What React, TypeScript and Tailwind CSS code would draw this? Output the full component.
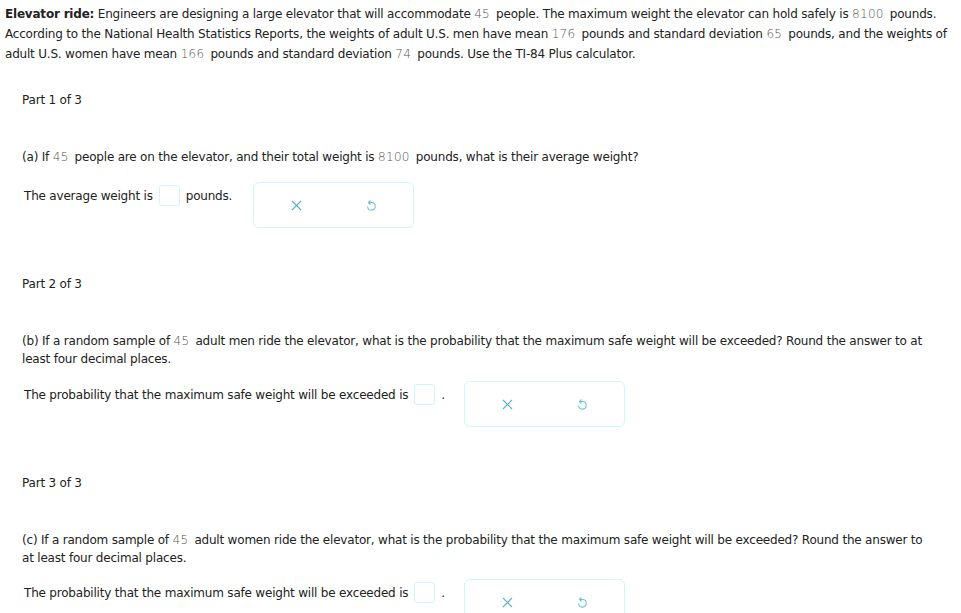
import React from "react";

function N({ v }: { v: string }) {
  return <span className="text-[#555] font-['DejaVu_Sans_ExtraLight','DejaVu_Sans',sans-serif] font-extralight mr-[6px] tracking-[0.3px]">{v}</span>;
}

function XIcon() {
  return (
    <svg width="11" height="11" viewBox="0 0 11 11" fill="none" stroke="#5aaed6" strokeWidth="1.1">
      <path d="M1 1 L10 10 M10 1 L1 10" />
    </svg>
  );
}

function UndoIcon() {
  return (
    <svg width="12" height="14" viewBox="0 0 12 14" fill="none" stroke="#6cc0e0" strokeWidth="1.1">
      <path d="M4 3.5 H6.5 A3.8 3.8 0 1 1 2.6 7.5" />
      <path d="M5.5 1.5 L3.5 3.5 L5.5 5.5" />
    </svg>
  );
}

function Actions() {
  return (
    <div className="w-[161px] h-[46px] border border-[#d4f4fb] rounded-[6px] flex items-center justify-between pl-[37px] pr-[36px] pt-[1px]">
      <XIcon />
      <UndoIcon />
    </div>
  );
}

function Box() {
  return <span className="inline-block w-[21px] h-[21px] border border-[#d4f4fb] rounded-[3px] align-middle mx-[6px]" />;
}

export default function App() {
  return (
    <div className="w-[961px] h-[613px] overflow-hidden bg-white text-[#222] font-['DejaVu_Sans',sans-serif] text-[12px] leading-[20px] tracking-[-0.2px]">
      <div className="pl-[5px] pt-[4px]">
        <p>
          <b>Elevator ride:</b> Engineers are designing a large elevator that will accommodate <N v="45" />people. The maximum
          weight the elevator can hold safely is <N v="8100" />pounds.
          <br />
          According to the National Health Statistics Reports, the weights of adult U.S. men have mean <N v="176" />pounds and
          standard deviation <N v="65" />pounds, and the weights of
          <br />
          adult U.S. women have mean <N v="166" />pounds and standard deviation <N v="74" />pounds. Use the TI-84 Plus calculator.
        </p>
      </div>

      <div className="pl-[22px] pt-[26px]">Part 1 of 3</div>
      <div className="pl-[22px] pt-[37px]">
        (a) If <N v="45" />people are on the elevator, and their total weight is <N v="8100" />pounds, what is their average weight?
      </div>
      <div className="pl-[24px] pt-[8px] flex items-start gap-[21px]">
        <div className="pt-[10px] flex items-center">
          The average weight is<Box />pounds.
        </div>
        <div className="mt-[7px]">
          <Actions />
        </div>
      </div>

      <div className="pl-[22px] pt-[46px]">Part 2 of 3</div>
      <div className="pl-[22px] pt-[38px] leading-[18px]">
        (b) If a random sample of <N v="45" />adult men ride the elevator, what is the probability that the maximum safe weight will be
        exceeded? Round the answer to at
        <br />
        least four decimal places.
      </div>
      <div className="pl-[24px] pt-[13px] flex items-start gap-[19px]">
        <div className="pt-[3px] flex items-center">
          The probability that the maximum safe weight will be exceeded is<Box />.
        </div>
        <Actions />
      </div>

      <div className="pl-[22px] pt-[46px]">Part 3 of 3</div>
      <div className="pl-[22px] pt-[38px] leading-[18px]">
        (c) If a random sample of <N v="45" />adult women ride the elevator, what is the probability that the maximum safe weight will
        be exceeded? Round the answer to
        <br />
        at least four decimal places.
      </div>
      <div className="pl-[24px] pt-[12px] flex items-start gap-[19px]">
        <div className="pt-[3px] flex items-center">
          The probability that the maximum safe weight will be exceeded is<Box />.
        </div>
        <Actions />
      </div>
    </div>
  );
}
